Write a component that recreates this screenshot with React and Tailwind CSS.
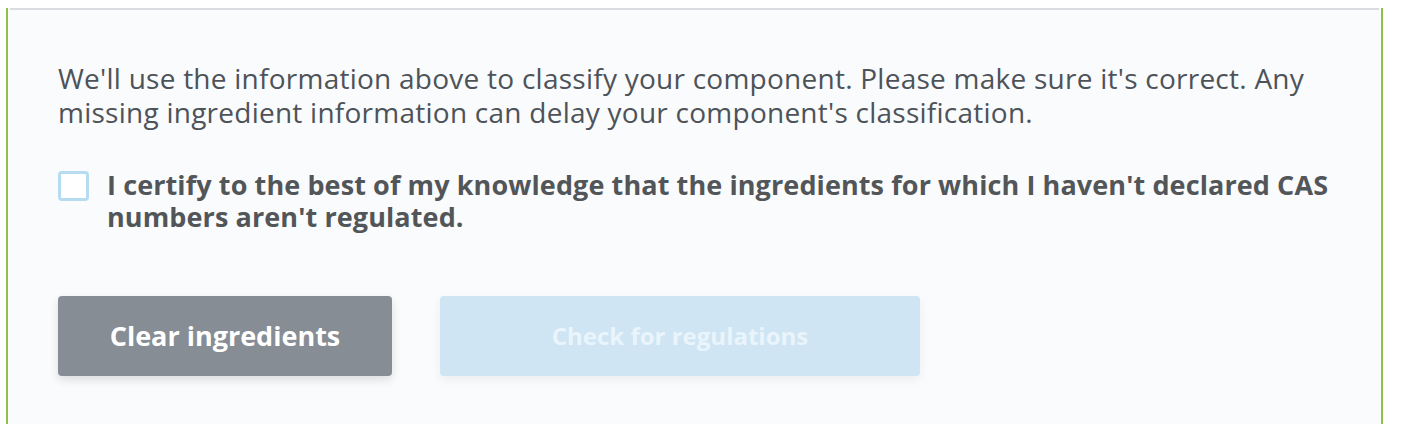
import React from "react";

export default function App() {
  const [certified, setCertified] = React.useState(false);

  return (
    <div className="w-[1402px] h-[424px] bg-white pl-[6px] overflow-hidden" style={{ fontFamily: '"Open Sans", "Noto Sans", sans-serif' }}>
      <div className="w-[1377px] h-[426px] border-2 border-t-0 border-[#8bc34a] rounded-b-[8px] bg-[#fafbfc]">
        {/* divider under the ingredient table */}
        <div className="mt-[8px] mx-[2px] h-[2px] bg-[#d9dce1]" />

        <div className="pl-[50px] pr-[20px] pt-[51px]">
          <p className="text-[28px] leading-[34px] tracking-[0.25px] text-[#4d5359] whitespace-nowrap">
            We'll use the information above to classify your component. Please make sure it's correct. Any
            <br />
            missing ingredient information can delay your component's classification.
          </p>

          <label className="mt-[40px] flex items-start gap-[18px] cursor-pointer">
            <input
              type="checkbox"
              checked={certified}
              onChange={(e) => setCertified(e.target.checked)}
              className="appearance-none mt-[2px] w-[31px] h-[30px] shrink-0 rounded-[4px] border-[3px] border-[#b5dcf1] bg-white"
            />
            <span className="text-[27px] leading-[32px] tracking-[0.1px] font-bold text-[#525659] whitespace-nowrap">
              I certify to the best of my knowledge that the ingredients for which I haven't declared CAS
              <br />
              numbers aren't regulated.
            </span>
          </label>

          <div className="mt-[63px] flex gap-[48px]">
            <button className="w-[334px] h-[80px] rounded-[4px] bg-[#878d94] text-white text-[27px] font-bold shadow-[0_4px_10px_rgba(0,0,0,0.12)]">
              Clear ingredients
            </button>
            <button
              disabled={!certified}
              className="w-[480px] h-[80px] rounded-[4px] bg-[#cfe5f4] text-[#eaf4fb] text-[24px] font-bold shadow-[0_4px_10px_rgba(0,0,0,0.06)]"
            >
              Check for regulations
            </button>
          </div>
        </div>
      </div>
    </div>
  );
}
